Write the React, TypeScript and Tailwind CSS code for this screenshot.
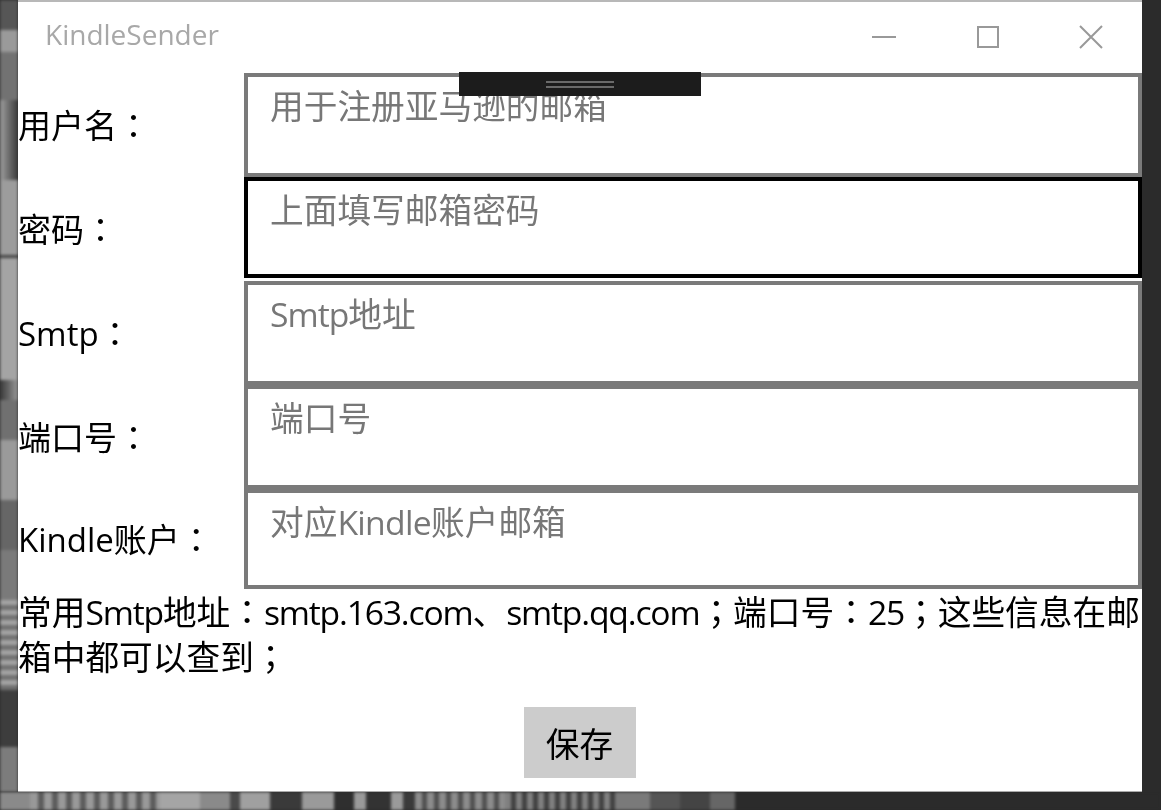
import React from 'react';

const font = { fontFamily: '"Open Sans", "Noto Sans CJK SC", sans-serif' };

// full width colon and semicolon sit centred in the cell, which the TC face does
function Punct({ children }: { children: string }) {
  return <span className="font-['Noto_Sans_CJK_TC']">{children}</span>;
}

function Latin({ children }: { children: string }) {
  return <span className="tracking-[-1.2px]">{children}</span>;
}

const fields = [
  { label: '用户名', hint: <>用于注册亚马逊的邮箱</> },
  { label: '密码', hint: <>上面填写邮箱密码</>, focused: true },
  { label: 'Smtp', hint: <><span className="tracking-[-1px]">Smtp</span>地址</> },
  { label: '端口号', hint: <>端口号</> },
  { label: 'Kindle账户', hint: <>对应<span className="tracking-[-0.7px]">Kindle</span>账户邮箱</> },
];

// bits of the wallpaper that show around the window
function LeftStrip() {
  return (
    <div className="w-[18px] shrink-0 overflow-hidden">
      <div className="flex flex-col h-full blur-[1.5px]">
        <div className="h-[30px] bg-[#565656]" />
        <div className="h-[22px] bg-[#9a9a9a]" />
        <div className="h-[48px] bg-[#727272]" />
        <div className="h-[80px] bg-gradient-to-r from-[#a0a0a0] to-[#3c3c3c]" />
        <div className="h-[75px] bg-[#9c9c9c]" />
        <div className="h-[3px] bg-[#444]" />
        <div className="h-[122px] bg-[#a4a4a4]" />
        <div className="h-[20px] bg-gradient-to-r from-[#3a3a3a] to-[#9a9a9a]" />
        <div className="h-[40px] bg-[#707070]" />
        <div className="h-[60px] bg-[#9a9a9a]" />
        <div className="h-[50px] bg-[#666]" />
        <div className="h-[50px] bg-[#7a7a7a]" />
        <div className="h-[90px] bg-[repeating-linear-gradient(180deg,#a4a4a4_0px,#a4a4a4_5px,#707070_5px,#707070_10px)]" />
        <div className="h-[57px] bg-[#3d3d3d]" />
        <div className="flex-1 bg-[#7c7c7c]" />
      </div>
    </div>
  );
}

function BottomStrip() {
  return (
    <div className="h-[18px] shrink-0 overflow-hidden">
      <div className="flex h-full blur-[1.5px]">
        <div className="w-[30px] bg-[#8a8a8a]" />
        <div className="w-[130px] bg-[repeating-linear-gradient(90deg,#999_0px,#999_8px,#5c5c5c_8px,#5c5c5c_14px)]" />
        <div className="w-[40px] bg-[#a5a5a5]" />
        <div className="w-[30px] bg-[#8a8a8a]" />
        <div className="w-[10px] bg-[#4a4a4a]" />
        <div className="w-[30px] bg-[#a0a0a0]" />
        <div className="w-[32px] bg-[#3a3a3a]" />
        <div className="w-[32px] bg-[#9a9a9a]" />
        <div className="w-[20px] bg-[#2f2f2f]" />
        <div className="w-[12px] bg-[#9a9a9a]" />
        <div className="w-[25px] bg-[#333]" />
        <div className="w-[12px] bg-[#9a9a9a]" />
        <div className="w-[12px] bg-[#3a3a3a]" />
        <div className="w-[90px] bg-[repeating-linear-gradient(90deg,#8c8c8c_0px,#8c8c8c_7px,#505050_7px,#505050_12px)]" />
        <div className="w-[110px] bg-[repeating-linear-gradient(90deg,#808080_0px,#808080_6px,#404040_6px,#404040_11px)]" />
        <div className="w-[35px] bg-[#7a7a7a]" />
        <div className="w-[30px] bg-[#555]" />
        <div className="w-[30px] bg-[#444]" />
        <div className="w-[25px] bg-[#666]" />
        <div className="flex-1 bg-[#2b2b2b]" />
      </div>
    </div>
  );
}

export default function App() {
  return (
    <div className="w-[1161px] h-[810px] flex flex-col overflow-hidden bg-[#2b2b2b]" style={font}>
      <div className="flex-1 flex min-h-0">
        <LeftStrip />
        <div className="flex-1 flex flex-col min-w-0 blur-[0.5px]">
          <div className="h-[2px] bg-[#b8b8b8] shrink-0" />
          <div className="relative flex-1 bg-white flex flex-col border-b border-[#aaaaaa]">
            {/* Title bar */}
            <div className="h-[71px] flex items-center justify-between shrink-0 pl-[27px]">
              <span className="text-[28px] text-[#a8a8a8] relative bottom-[4px]">KindleSender</span>
              <div className="flex items-center relative bottom-[1px]">
                <svg width="24" height="24" viewBox="0 0 24 24" className="mr-[80px]" stroke="#999" strokeWidth="2" fill="none">
                  <path d="M0 12h24" />
                </svg>
                <svg width="24" height="24" viewBox="0 0 24 24" className="mr-[79px]" stroke="#999" strokeWidth="2" fill="none">
                  <rect x="2" y="2" width="20" height="20" />
                </svg>
                <svg width="24" height="24" viewBox="0 0 24 24" className="mr-[39px]" stroke="#999" strokeWidth="2" fill="none">
                  <path d="M1 1l22 22M23 1L1 23" />
                </svg>
              </div>
            </div>

            {/* Form rows */}
            <div className="flex flex-col">
              {fields.map((f, i) => (
                <div key={f.label} className={`flex ${i === 4 ? 'h-[100px]' : 'h-[104px]'}`}>
                  <div className="w-[226px] shrink-0 flex items-center pt-[1px] text-[33px] text-black whitespace-nowrap">
                    <span>
                      {f.label}
                      <Punct>：</Punct>
                    </span>
                  </div>
                  <div
                    className={
                      f.focused
                        ? 'flex-1 h-[101px] border-[4px] border-black pl-[22px] pt-[7px] text-[33.7px] leading-[44px] text-[#777]'
                        : 'flex-1 border-[4px] border-[#7a7a7a] pl-[22px] pt-[7px] text-[33.7px] leading-[44px] text-[#777]'
                    }
                  >
                    {f.hint}
                  </div>
                </div>
              ))}
            </div>

            <p className="text-[33.7px] leading-[44px] text-black">
              常用<Latin>Smtp</Latin>地址<Punct>：</Punct>
              <Latin>smtp.163.com</Latin>、<Latin>smtp.qq.com</Latin>
              <Punct>；</Punct>端口号<Punct>：</Punct>
              <Latin>25</Latin>
              <Punct>；</Punct>这些信息在邮箱中都可以查到<Punct>；</Punct>
            </p>

            <div className="flex justify-center mt-[28px] pr-[1px]">
              <button className="w-[112px] h-[71px] pt-[3px] bg-[#cccccc] text-[33.7px] text-black">保存</button>
            </div>

            {/* Drag handle overlay */}
            <div className="absolute left-[441px] top-[70px] w-[242px] h-[24px] bg-[#1c1c1c] flex flex-col items-center justify-center gap-[3px]">
              <div className="w-[68px] h-[2px] bg-[#6a6a6a]" />
              <div className="w-[68px] h-[2px] bg-[#6a6a6a]" />
            </div>
          </div>
        </div>
        <div className="w-[19px] bg-[#2b2b2b] shrink-0" />
      </div>
      <BottomStrip />
    </div>
  );
}
